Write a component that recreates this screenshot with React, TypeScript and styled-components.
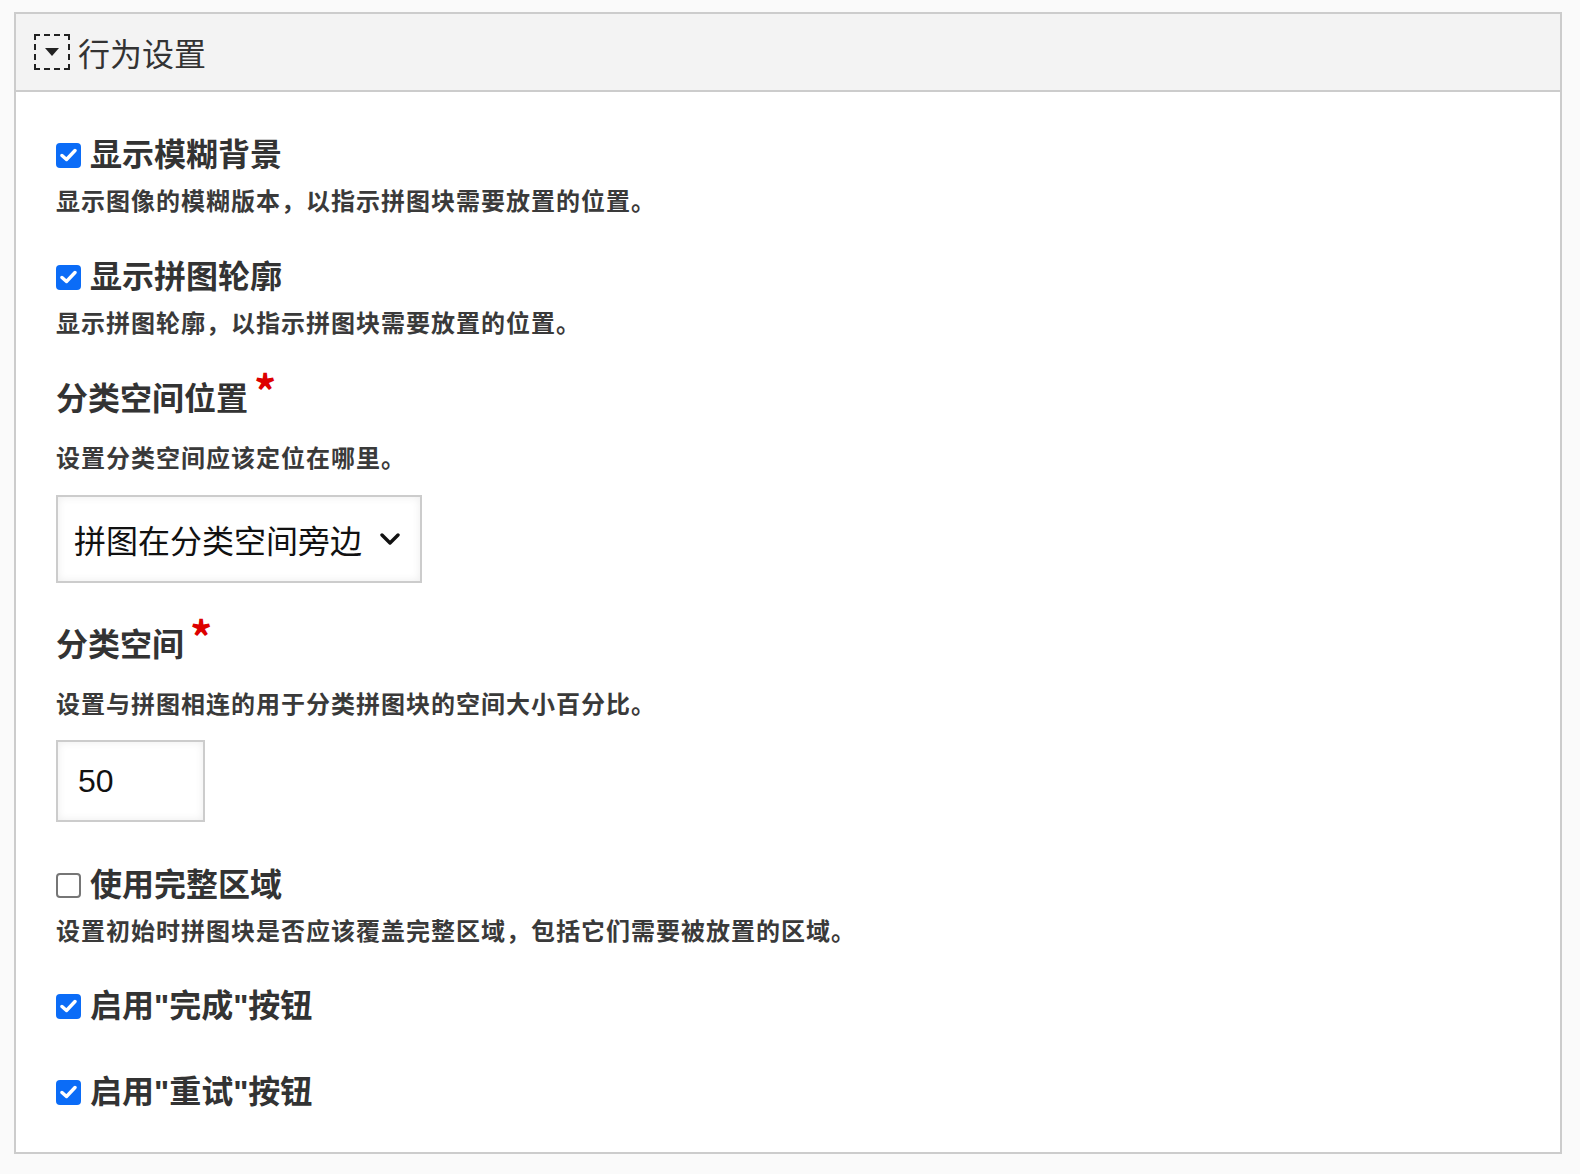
import styled, { createGlobalStyle } from "styled-components";

const GlobalStyle = createGlobalStyle`
  body {
    margin: 0;
    padding: 0;
    background-color: #fafafa;
    font-family: "Noto Sans CJK SC", "Noto Sans", sans-serif;
    color: #333;
  }
`;

const Panel = styled.section`
  margin: 12px 18px 28px 14px;
  border: 2px solid #cccccc;
  background-color: #ffffff;
`;

const Header = styled.div`
  display: flex;
  align-items: center;
  gap: 8px;
  height: 76px;
  padding-left: 18px;
  background-color: #f3f3f3;
  border-bottom: 2px solid #cccccc;
`;

const ToggleIcon = styled.span`
  display: flex;
  align-items: center;
  justify-content: center;
  width: 32px;
  height: 32px;
  border: 2px dashed #222;
`;

const HeaderTitle = styled.h2`
  margin: 0;
  font-size: 32px;
  font-weight: 400;
  line-height: 40px;
  color: #333;
`;

const Body = styled.div`
  display: flex;
  flex-direction: column;
  padding: 43px 40px 40px 40px;
`;

const Field = styled.div<{ $gap?: number }>`
  display: flex;
  flex-direction: column;
  margin-bottom: ${(p) => p.$gap ?? 40}px;
  &:last-child {
    margin-bottom: 0;
  }
`;

const CheckRow = styled.label`
  display: flex;
  align-items: center;
  gap: 9px;
  height: 40px;
`;

const Box = styled.span<{ $checked: boolean }>`
  display: flex;
  align-items: center;
  justify-content: center;
  box-sizing: border-box;
  width: 25px;
  height: 25px;
  border-radius: 4px;
  background-color: ${(p) => (p.$checked ? "#0b6cf7" : "#ffffff")};
  border: ${(p) => (p.$checked ? "none" : "2px solid #767676")};
`;

const Label = styled.div`
  font-family: "Liberation Sans", "Noto Sans CJK SC", sans-serif;
  font-size: 32px;
  font-weight: 700;
  line-height: 40px;
  color: #333;
`;

const Required = styled.span`
  color: #dd0000;
  font-family: "Noto Sans CJK SC", sans-serif;
  font-size: 44px;
  font-weight: 700;
  line-height: 0;
  margin-left: 6px;
  position: relative;
  top: -2px;
`;

const Description = styled.p<{ $top: number }>`
  margin: ${(p) => p.$top}px 0 0 0;
  font-size: 24px;
  font-weight: 600;
  line-height: 32px;
  letter-spacing: 1px;
  color: #3a3a3a;
`;

const SelectBox = styled.div`
  display: flex;
  align-items: center;
  gap: 18px;
  box-sizing: border-box;
  width: 366px;
  height: 88px;
  margin-top: 22px;
  padding: 0 0 0 16px;
  border: 2px solid #cccccc;
  box-shadow: inset 0 0 8px rgba(0, 0, 0, 0.08);
  background-color: #fff;
  font-size: 32px;
  color: #111;
`;

const NumberBox = styled.div`
  display: flex;
  align-items: center;
  box-sizing: border-box;
  width: 149px;
  height: 82px;
  margin-top: 21px;
  padding-left: 20px;
  border: 2px solid #cccccc;
  box-shadow: inset 0 0 8px rgba(0, 0, 0, 0.08);
  background-color: #fff;
  font-family: "Liberation Sans", Arial, sans-serif;
  font-size: 32px;
  color: #111;
`;

const Check = ({ checked }: { checked: boolean }) => (
  <Box $checked={checked}>
    {checked && (
      <svg width="17" height="14" viewBox="0 0 17 14">
        <path
          d="M2 7.5 L6.5 11.5 L15 2.5"
          fill="none"
          stroke="#fff"
          strokeWidth="3.4"
          strokeLinecap="round"
          strokeLinejoin="round"
        />
      </svg>
    )}
  </Box>
);

const CheckField = ({
  checked,
  label,
  desc,
  gap,
}: {
  checked: boolean;
  label: string;
  desc?: string;
  gap?: number;
}) => (
  <Field $gap={gap}>
    <CheckRow>
      <Check checked={checked} />
      <Label>{label}</Label>
    </CheckRow>
    {desc && <Description $top={9}>{desc}</Description>}
  </Field>
);

const App = () => {
  return (
    <>
      <GlobalStyle />
      <Panel>
        <Header>
          <ToggleIcon>
            <svg width="14" height="8" viewBox="0 0 14 8">
              <path d="M0 0 L14 0 L7 8 Z" fill="#222" />
            </svg>
          </ToggleIcon>
          <HeaderTitle>行为设置</HeaderTitle>
        </Header>
        <Body>
          <CheckField
            checked
            label="显示模糊背景"
            desc="显示图像的模糊版本，以指示拼图块需要放置的位置。"
            gap={41}
          />
          <CheckField
            checked
            label="显示拼图轮廓"
            desc="显示拼图轮廓，以指示拼图块需要放置的位置。"
            gap={41}
          />
          <Field $gap={42}>
            <Label>
              分类空间位置<Required>*</Required>
            </Label>
            <Description $top={22}>设置分类空间应该定位在哪里。</Description>
            <SelectBox>
              <span>拼图在分类空间旁边</span>
              <svg width="20" height="13" viewBox="0 0 20 13">
                <path
                  d="M2 2 L10 10 L18 2"
                  fill="none"
                  stroke="#111"
                  strokeWidth="3.4"
                  strokeLinecap="round"
                  strokeLinejoin="round"
                />
              </svg>
            </SelectBox>
          </Field>
          <Field $gap={43}>
            <Label>
              分类空间<Required>*</Required>
            </Label>
            <Description $top={22}>
              设置与拼图相连的用于分类拼图块的空间大小百分比。
            </Description>
            <NumberBox>50</NumberBox>
          </Field>
          <CheckField
            checked={false}
            label="使用完整区域"
            desc="设置初始时拼图块是否应该覆盖完整区域，包括它们需要被放置的区域。"
            gap={40}
          />
          <CheckField checked label='启用"完成"按钮' gap={46} />
          <CheckField checked label='启用"重试"按钮' />
        </Body>
      </Panel>
    </>
  );
};

export default App;
